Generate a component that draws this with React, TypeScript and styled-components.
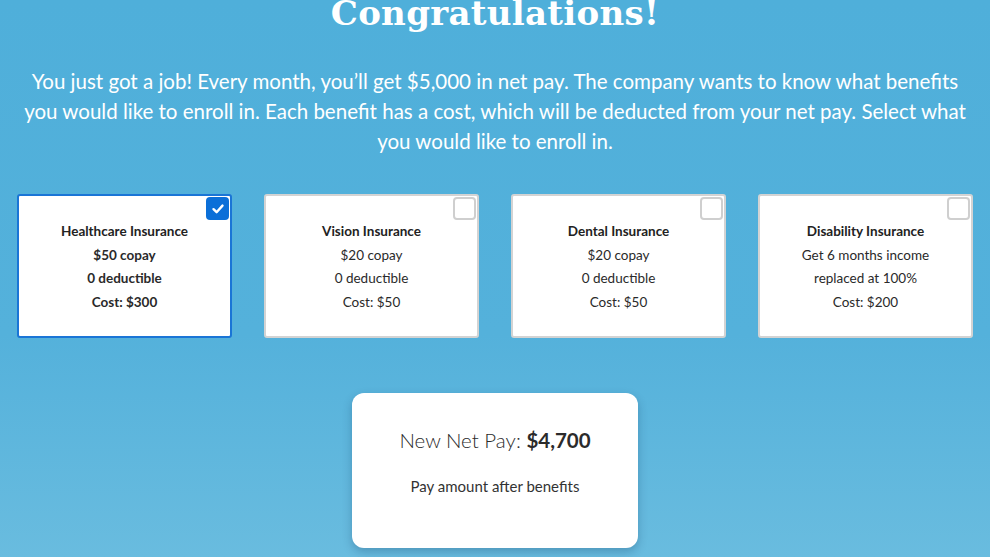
import React, { useState } from "react";
import styled, { createGlobalStyle } from "styled-components";

const Global = createGlobalStyle`
  html, body { margin: 0; padding: 0; }
  body {
    font-family: Lato, "Open Sans", sans-serif;
    background: linear-gradient(180deg, #4fafda 0%, #54b1db 60%, #69bcdf 100%);
    min-height: 557px;
    overflow: hidden;
  }
`;

const Page = styled.main`
  width: 990px;
  height: 557px;
  display: flex;
  flex-direction: column;
  align-items: center;
  color: #fff;
`;

const Title = styled.h1`
  margin: -12px 0 0;
  font-family: "DejaVu Serif", serif;
  font-weight: 700;
  font-size: 34px;
  line-height: 50px;
  letter-spacing: 0.3px;
`;

const Intro = styled.p`
  margin: 28px 0 0;
  padding: 0 20px;
  font-size: 20.5px;
  line-height: 30px;
  text-align: center;
`;

const Cards = styled.div`
  margin-top: 38px;
  display: grid;
  grid-template-columns: repeat(4, 215px);
  gap: 32px;
`;

const Card = styled.label<{ $selected: boolean }>`
  position: relative;
  box-sizing: border-box;
  height: 144px;
  background: #fff;
  border: ${(p) => (p.$selected ? "2px solid #1a75d6" : "2px solid #d3d3d3")};
  border-radius: 3px;
  color: #222;
  display: flex;
  flex-direction: column;
  align-items: center;
  padding-top: 24px;
  font-size: 13.5px;
  font-weight: ${(p) => (p.$selected ? 700 : 400)};
  cursor: pointer;
`;

const CardTitle = styled.div`
  font-weight: 700;
  line-height: 23.5px;
`;

const CardLine = styled.div`
  line-height: 23.5px;
  color: #2a2a2a;
`;

const Check = styled.span<{ $checked: boolean }>`
  position: absolute;
  top: 1px;
  right: 1px;
  width: 23px;
  height: 23px;
  box-sizing: border-box;
  border-radius: 4px;
  border: ${(p) => (p.$checked ? "none" : "2px solid #cfcfcf")};
  background: ${(p) => (p.$checked ? "#0b6fd8" : "#fff")};
  display: flex;
  align-items: center;
  justify-content: center;
`;

const Summary = styled.section`
  margin-top: 55px;
  width: 286px;
  height: 155px;
  box-sizing: border-box;
  background: #fff;
  border-radius: 12px;
  box-shadow: 0 4px 10px rgba(0, 40, 80, 0.25);
  color: #2b2b2b;
  display: flex;
  flex-direction: column;
  align-items: center;
  padding-top: 33px;
`;

const NetPay = styled.div`
  font-size: 20.5px;
  font-weight: 300;
  line-height: 28px;
  strong { font-weight: 700; }
`;

const NetSub = styled.div`
  margin-top: 23px;
  font-size: 15px;
  font-weight: 400;
  color: #333;
`;

const benefits = [
  { title: "Healthcare Insurance", lines: ["$50 copay", "0 deductible", "Cost: $300"], cost: 300 },
  { title: "Vision Insurance", lines: ["$20 copay", "0 deductible", "Cost: $50"], cost: 50 },
  { title: "Dental Insurance", lines: ["$20 copay", "0 deductible", "Cost: $50"], cost: 50 },
  { title: "Disability Insurance", lines: ["Get 6 months income", "replaced at 100%", "Cost: $200"], cost: 200 },
];

export default function App() {
  const [sel, setSel] = useState<boolean[]>([true, false, false, false]);
  const net = 5000 - benefits.reduce((s, b, i) => s + (sel[i] ? b.cost : 0), 0);
  return (
    <>
      <Global />
      <Page>
        <Title>Congratulations!</Title>
        <Intro>
          You just got a job! Every month, you’ll get $5,000 in net pay. The company wants to know what benefits
          you would like to enroll in. Each benefit has a cost, which will be deducted from your net pay. Select what
          you would like to enroll in.
        </Intro>
        <Cards>
          {benefits.map((b, i) => (
            <Card
              key={b.title}
              $selected={sel[i]}
              onClick={() => setSel(sel.map((v, j) => (j === i ? !v : v)))}
            >
              <Check $checked={sel[i]}>
                {sel[i] && (
                  <svg width="14" height="14" viewBox="0 0 14 14">
                    <path d="M2.5 7.2 L5.6 10.2 L11.5 3.6" fill="none" stroke="#fff" strokeWidth="2.4" strokeLinecap="round" strokeLinejoin="round" />
                  </svg>
                )}
              </Check>
              <CardTitle>{b.title}</CardTitle>
              {b.lines.map((l) => (
                <CardLine key={l}>{l}</CardLine>
              ))}
            </Card>
          ))}
        </Cards>
        <Summary>
          <NetPay>
            New Net Pay: <strong>${net.toLocaleString("en-US")}</strong>
          </NetPay>
          <NetSub>Pay amount after benefits</NetSub>
        </Summary>
      </Page>
    </>
  );
}
